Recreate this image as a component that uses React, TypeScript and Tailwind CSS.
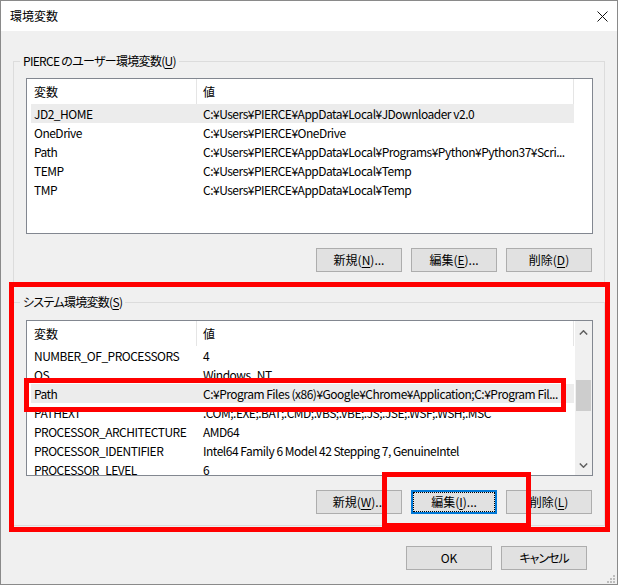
import React from "react";

type Row = { name: string; value: string; sel?: boolean };

const userRows: Row[] = [
  { name: "JD2_HOME", value: "C:¥Users¥PIERCE¥AppData¥Local¥JDownloader v2.0", sel: true },
  { name: "OneDrive", value: "C:¥Users¥PIERCE¥OneDrive" },
  { name: "Path", value: "C:¥Users¥PIERCE¥AppData¥Local¥Programs¥Python¥Python37¥Scri..." },
  { name: "TEMP", value: "C:¥Users¥PIERCE¥AppData¥Local¥Temp" },
  { name: "TMP", value: "C:¥Users¥PIERCE¥AppData¥Local¥Temp" },
];

const sysRows: Row[] = [
  { name: "NUMBER_OF_PROCESSORS", value: "4" },
  { name: "OS", value: "Windows_NT" },
  { name: "Path", value: "C:¥Program Files (x86)¥Google¥Chrome¥Application;C:¥Program Fil...", sel: true },
  { name: "PATHEXT", value: ".COM;.EXE;.BAT;.CMD;.VBS;.VBE;.JS;.JSE;.WSF;.WSH;.MSC" },
  { name: "PROCESSOR_ARCHITECTURE", value: "AMD64" },
  { name: "PROCESSOR_IDENTIFIER", value: "Intel64 Family 6 Model 42 Stepping 7, GenuineIntel" },
  { name: "PROCESSOR_LEVEL", value: "6" },
];

function U({ children }: { children: React.ReactNode }) {
  return <span className="underline underline-offset-[2px]">{children}</span>;
}

function Btn({ children, focused }: { children: React.ReactNode; focused?: boolean }) {
  if (focused) {
    return (
      <div className="h-[24px] w-[86px] border-2 border-[#0078d7] bg-[#e1e1e1]">
        <div className="flex h-full w-full items-center justify-center border border-dotted border-black leading-none">
          {children}
        </div>
      </div>
    );
  }
  return (
    <div className="flex h-[24px] w-[86px] items-center justify-center border border-[#adadad] bg-[#e1e1e1] leading-none">
      {children}
    </div>
  );
}

function Header() {
  return (
    <div className="flex h-[25px] shrink-0 items-center">
      <div className="w-[169px] pl-[7px]">変数</div>
      <div className="flex h-full w-[378px] items-center border-x border-[#e5e5e5] pl-[6px]">値</div>
    </div>
  );
}

function Rows({ rows }: { rows: Row[] }) {
  return (
    <>
      {rows.map((r) => (
        <div
          key={r.name}
          className={`ml-[4px] flex h-[19px] w-[543px] shrink-0 items-center leading-[19px] tracking-[-0.5px] ${r.sel ? "bg-[#ececec]" : ""}`}
        >
          <div className="w-[165px] overflow-hidden whitespace-nowrap pl-[3px]">{r.name}</div>
          <div className="w-[378px] overflow-hidden whitespace-nowrap pl-[7px]">{r.value}</div>
        </div>
      ))}
    </>
  );
}

function Chevron({ up }: { up?: boolean }) {
  return (
    <svg width="9" height="5" viewBox="0 0 9 5">
      <polyline
        points={up ? "0.8,4.5 4.5,0.8 8.2,4.5" : "0.8,0.5 4.5,4.2 8.2,0.5"}
        fill="none"
        stroke="#606060"
        strokeWidth="1.5"
      />
    </svg>
  );
}

export default function App() {
  return (
    <div className="relative h-[585px] w-[618px] overflow-hidden border border-[#8a8a8a] bg-[#f0f0f0] font-['Noto_Sans_CJK_JP','Noto_Sans',sans-serif] text-[12px] text-black [font-feature-settings:'palt']">
      {/* title bar */}
      <div className="flex h-[30px] items-center justify-between bg-white pl-[9px] pr-[9px]">
        <span className="leading-none">環境変数</span>
        <svg width="11" height="11" viewBox="0 0 11 11">
          <path d="M0.5 0.5 L10.5 10.5 M10.5 0.5 L0.5 10.5" stroke="#111" strokeWidth="1" />
        </svg>
      </div>

      <div className="pt-[22px]">
        {/* user group */}
        <fieldset className="ml-[12px] w-[592px] border border-[#dcdcdc] pb-[11px]">
          <legend className="ml-[6px] px-[3px] leading-[16px] tracking-[-0.7px]">
            PIERCE のユーザー環境変数(<U>U</U>)
          </legend>
          <div className="ml-[12px] mt-[9px] flex h-[156px] w-[567px] flex-col overflow-hidden border border-[#828790] bg-white">
            <Header />
            <Rows rows={userRows} />
          </div>
          <div className="mt-[14px] flex justify-end gap-[9px] pr-[12px]">
            <Btn>
              新規(<U>N</U>)...
            </Btn>
            <Btn>
              編集(<U>E</U>)...
            </Btn>
            <Btn>
              削除(<U>D</U>)
            </Btn>
          </div>
        </fieldset>

        {/* system group */}
        <fieldset className="ml-[12px] mt-[10px] w-[592px] border border-[#dcdcdc] pb-[11px]">
          <legend className="ml-[6px] px-[3px] leading-[16px] tracking-[-0.7px]">
            システム環境変数(<U>S</U>)
          </legend>
          <div className="ml-[12px] mt-[10px] flex h-[156px] w-[567px] overflow-hidden border border-[#828790] bg-white">
            <div className="flex w-[548px] flex-col overflow-hidden">
              <Header />
              <Rows rows={sysRows} />
            </div>
            <div className="flex w-[17px] flex-col bg-[#f0f0f0]">
              <div className="flex h-[17px] shrink-0 justify-center pt-[9px]">
                <Chevron up />
              </div>
              <div className="flex-1">
                <div className="ml-px mt-[42px] h-[31px] w-[15px] bg-[#cdcdcd]" />
              </div>
              <div className="flex h-[17px] shrink-0 justify-center pt-[5px]">
                <Chevron />
              </div>
            </div>
          </div>
          <div className="mt-[14px] flex justify-end gap-[9px] pr-[12px]">
            <Btn>
              新規(<U>W</U>)...
            </Btn>
            <Btn focused>
              編集(<U>I</U>)...
            </Btn>
            <Btn>
              削除(<U>L</U>)
            </Btn>
          </div>
        </fieldset>

        {/* dialog buttons */}
        <div className="mt-[20px] flex justify-end gap-[9px] pr-[30px]">
          <Btn>OK</Btn>
          <Btn>
            <span className="tracking-[-1px]">キャンセル</span>
          </Btn>
        </div>
      </div>

      {/* size grip */}
      <svg className="absolute bottom-[1px] right-[2px]" width="9" height="9" viewBox="0 0 9 9">
        <rect x="7" y="1" width="2" height="2" fill="#bdbdbd" />
        <rect x="4" y="4" width="2" height="2" fill="#bdbdbd" />
        <rect x="7" y="4" width="2" height="2" fill="#bdbdbd" />
        <rect x="1" y="7" width="2" height="2" fill="#bdbdbd" />
        <rect x="4" y="7" width="2" height="2" fill="#bdbdbd" />
        <rect x="7" y="7" width="2" height="2" fill="#bdbdbd" />
      </svg>

      {/* red annotations */}
      <div className="pointer-events-none absolute left-[8px] top-[281px] h-[250px] w-[601px] border-[5px] border-[#ff0000]" />
      <div className="pointer-events-none absolute left-[23px] top-[377px] h-[34px] w-[542px] border-[5px] border-[#ff0000]" />
      <div className="pointer-events-none absolute left-[381px] top-[471px] h-[56px] w-[149px] border-[5px] border-[#ff0000]" />
    </div>
  );
}
